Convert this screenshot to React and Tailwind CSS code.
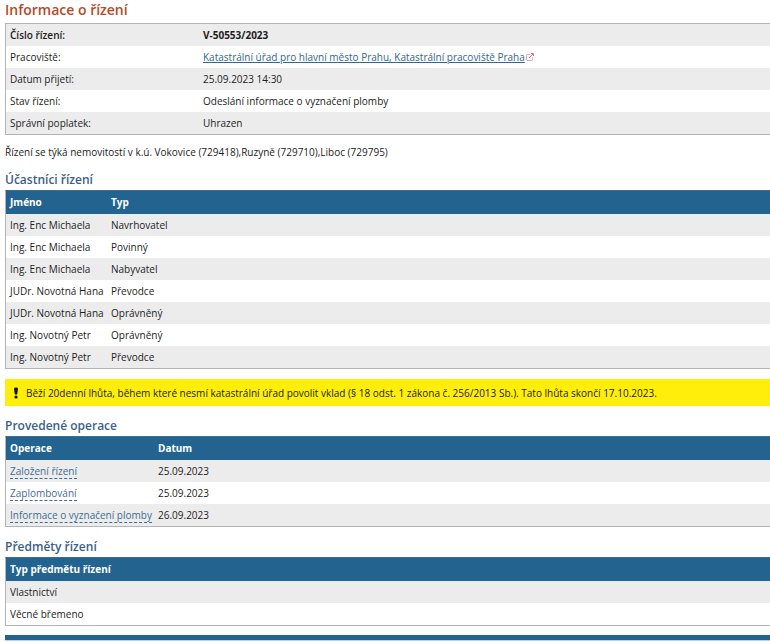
import { clsx } from 'clsx';

const details = [
  { label: 'Číslo řízení:', value: 'V-50553/2023', bold: true },
  {
    label: 'Pracoviště:',
    value: 'Katastrální úřad pro hlavní město Prahu, Katastrální pracoviště Praha',
    external: true,
  },
  { label: 'Datum přijetí:', value: '25.09.2023 14:30' },
  { label: 'Stav řízení:', value: 'Odeslání informace o vyznačení plomby' },
  { label: 'Správní poplatek:', value: 'Uhrazen' },
];

const participants = [
  ['Ing. Enc Michaela', 'Navrhovatel'],
  ['Ing. Enc Michaela', 'Povinný'],
  ['Ing. Enc Michaela', 'Nabyvatel'],
  ['JUDr. Novotná Hana', 'Převodce'],
  ['JUDr. Novotná Hana', 'Oprávněný'],
  ['Ing. Novotný Petr', 'Oprávněný'],
  ['Ing. Novotný Petr', 'Převodce'],
];

const operations = [
  ['Založení řízení', '25.09.2023'],
  ['Zaplombování', '25.09.2023'],
  ['Informace o vyznačení plomby', '26.09.2023'],
];

const subjects = [['Vlastnictví'], ['Věcné břemeno']];

function ExternalIcon() {
  return (
    <svg viewBox="0 0 8 8" className="ml-px inline-block size-2 align-baseline" fill="none" stroke="#dfa0a4" aria-hidden="true">
      <path d="M4 1.5H1.5a1 1 0 0 0-1 1v4a1 1 0 0 0 1 1h4a1 1 0 0 0 1-1V4.5" />
      <path d="M3 5 7 1M5 .5h2.5V3" stroke="#d0787e" />
    </svg>
  );
}

function SectionTitle({ children }) {
  return <h2 className="mt-2.5 text-[12px] leading-5 font-semibold text-[#3b5f87]">{children}</h2>;
}

function DataTable({ columns, rows, firstWidth, linked }) {
  return (
    <table className="w-full table-fixed border-separate border-spacing-0 border-y border-l border-[#b4b4b4] border-t-[#3f6f90]">
      <thead>
        <tr className="h-[23px] bg-[#22648f] text-left text-white">
          {columns.map((column, i) => (
            <th key={column} scope="col" className={clsx('px-1 pt-0 pb-px font-bold', i === 0 && firstWidth)}>
              {column}
            </th>
          ))}
        </tr>
      </thead>
      <tbody>
        {rows.map((row, i) => (
          <tr key={i} className="h-[22px] odd:bg-[#ececec]">
            {row.map((cell, j) => (
              <td key={j} className="px-1 py-0 whitespace-nowrap">
                {linked && j === 0 ? (
                  <a href="#" className="border-b border-dashed border-[#3f6c93] text-[#3f6c93]">
                    {cell}
                  </a>
                ) : (
                  cell
                )}
              </td>
            ))}
          </tr>
        ))}
      </tbody>
    </table>
  );
}

export default function App() {
  return (
    <main className="overflow-hidden bg-white pl-[5px] font-['Open_Sans','Noto_Sans',sans-serif] text-[10px] leading-4 text-[#1c1c1c]">
      <h1 className="pb-[3px] text-[14px] leading-5 font-semibold text-[#b54a28]">Informace o řízení</h1>

      <table className="w-full table-fixed border-separate border-spacing-0 border-y border-l border-[#b4b4b4]">
        <tbody>
          {details.map((item) => (
            <tr key={item.label} className="h-[22px] odd:bg-[#ececec]">
              <th
                scope="row"
                className={clsx('w-[193px] px-1 py-0 text-left', item.bold ? 'font-semibold' : 'font-normal')}
              >
                {item.label}
              </th>
              <td className={clsx('px-1 py-0', item.bold && 'font-bold')}>
                {item.external ? (
                  <a href="#" className="text-[#2f6793]">
                    <span className="underline underline-offset-1">{item.value}</span>
                    <ExternalIcon />
                  </a>
                ) : (
                  item.value
                )}
              </td>
            </tr>
          ))}
        </tbody>
      </table>

      <p className="mt-[9px]">Řízení se týká nemovitostí v k.ú. Vokovice (729418),Ruzyně (729710),Liboc (729795)</p>

      <SectionTitle>Účastníci řízení</SectionTitle>
      <DataTable columns={['Jméno', 'Typ']} rows={participants} firstWidth="w-[101px]" />

      <div role="alert" className="mt-2.5 flex h-[27px] items-center bg-[#ffee0a] pl-2">
        <svg viewBox="0 0 6 12" className="mr-[7px] h-3 w-1.5" fill="#111" aria-hidden="true">
          <path d="M1 1.5Q1 .5 3 .5T5 1.5L4.2 7.5H1.8Z" />
          <circle cx="3" cy="10" r="1.6" />
        </svg>
        Běží 20denní lhůta, během které nesmí katastrální úřad povolit vklad (§ 18 odst. 1 zákona č. 256/2013 Sb.). Tato
        lhůta skončí 17.10.2023.
      </div>

      <SectionTitle>Provedené operace</SectionTitle>
      <DataTable columns={['Operace', 'Datum']} rows={operations} firstWidth="w-[148px]" linked />

      <SectionTitle>Předměty řízení</SectionTitle>
      <DataTable columns={['Typ předmětu řízení']} rows={subjects} />

      <div className="mt-[9px] h-1.5 border-b border-[#b9d3e6] bg-[#22648f]" />
    </main>
  );
}
